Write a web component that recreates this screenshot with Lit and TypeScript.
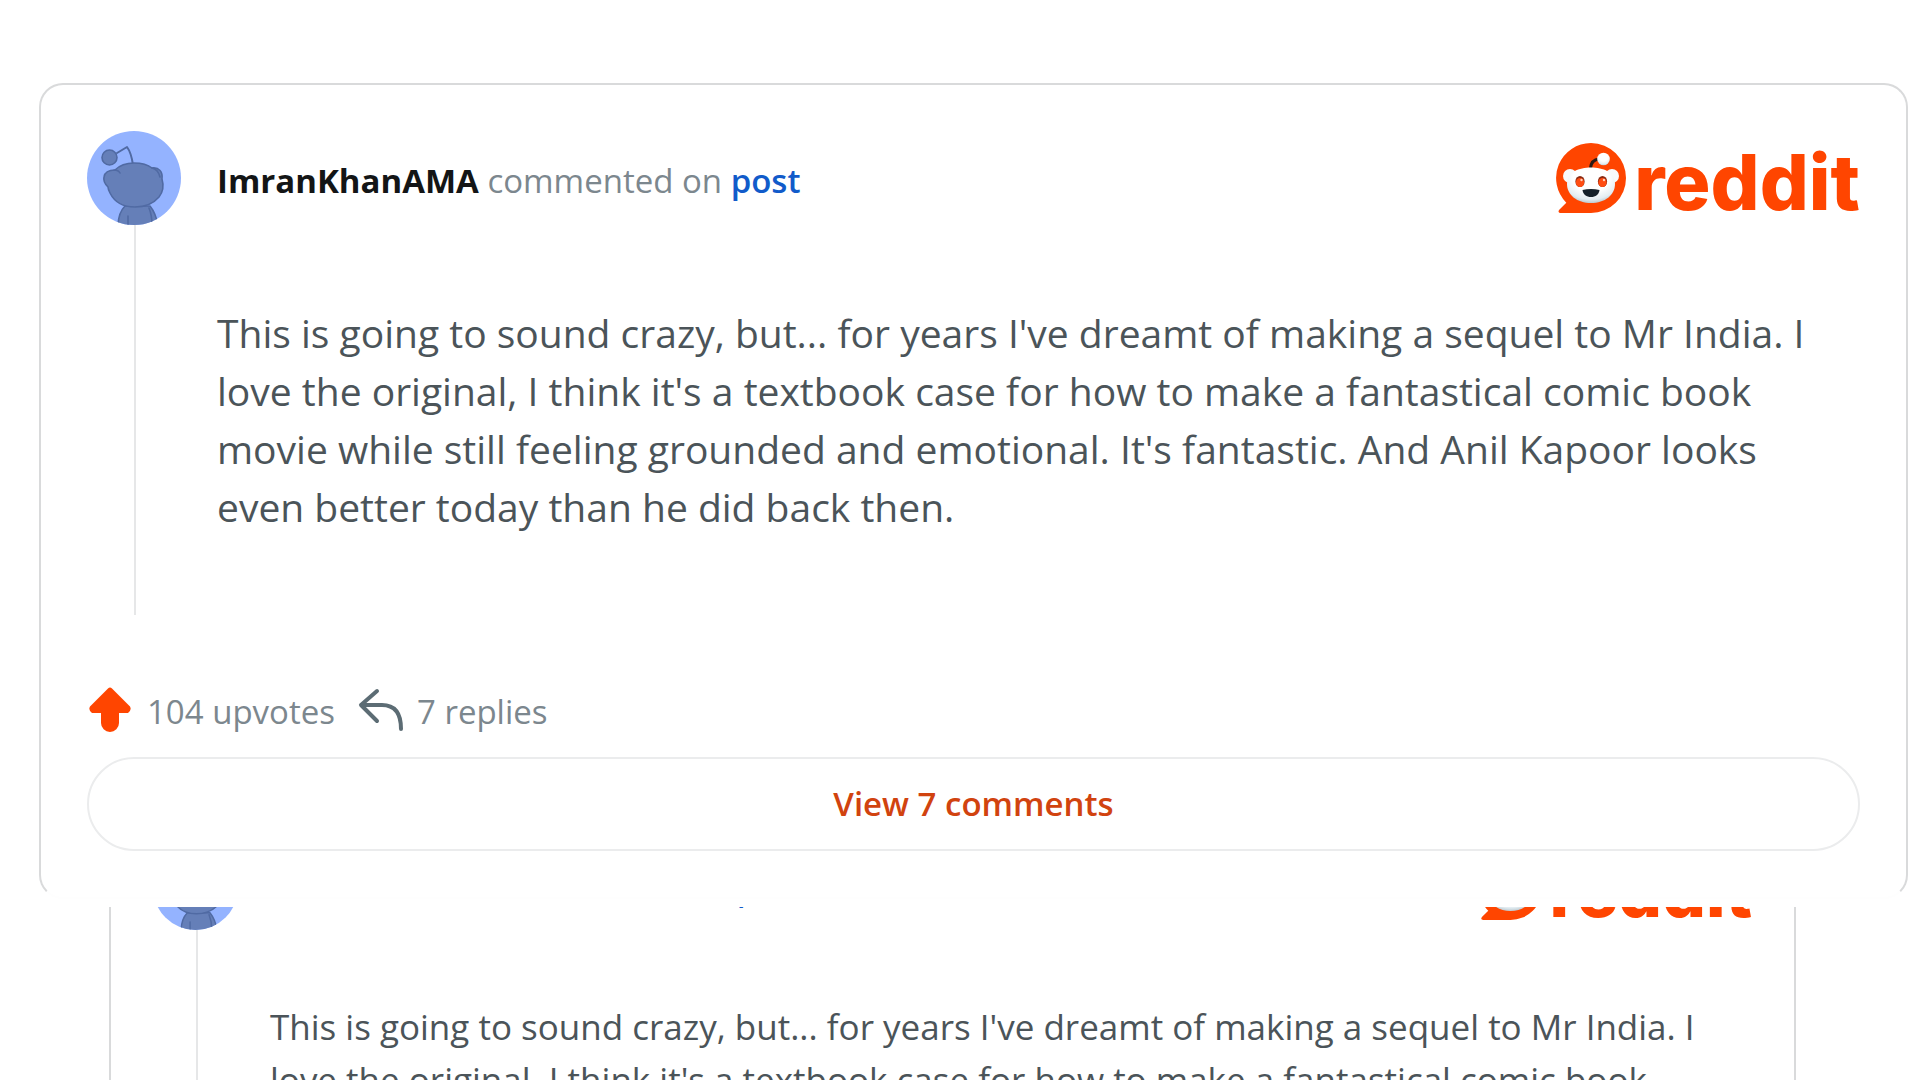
import { LitElement, html, css } from "lit";
import { customElement, property } from "lit/decorators.js";

interface Comment {
  author: string;
  body: string;
  upvotes: number;
  replies: number;
}

const comment: Comment = {
  author: "ImranKhanAMA",
  body:
    "This is going to sound crazy, but... for years I've dreamt of making a sequel to Mr India. I love the original, I think it's a textbook case for how to make a fantastical comic book movie while still feeling grounded and emotional. It's fantastic. And Anil Kapoor looks even better today than he did back then.",
  upvotes: 104,
  replies: 7,
};

@customElement("user-avatar")
class UserAvatar extends LitElement {
  static styles = css`
    :host {
      display: block;
      flex: none;
    }
    .avatar {
      display: block;
      width: 100%;
      height: 100%;
    }
  `;

  render() {
    return html`
      <svg class="avatar" viewBox="0 0 94 94" role="img" aria-label="Avatar">
        <clipPath id="disc"><circle cx="47" cy="47" r="47" /></clipPath>
        <g clip-path="url(#disc)">
          <rect width="94" height="94" fill="#94b3ff" />
          <g fill="#657fb8" stroke="#506aa3" stroke-width="1.6" stroke-linecap="round" stroke-linejoin="round">
            <path d="M46 34 C45 27 43 20 40 16 L30 22" fill="none" stroke-width="2" />
            <circle cx="22.500" cy="26.500" r="7.500" />
            <path d="M31 96 C31 86 34 79 38 75 H63 C67 80 70 87 71 96 Z" />
            <path d="M41 85 V94 M62 77 C64 82 65 88 65 94" fill="none" />
            <path
              d="M17 46 C18 40 23 39 28 39 C33 34 39 32 47 32 C55 32 60 33 65 37 C72 36 76 41 75 48 C77 55 76 61 72 66 C66 73 57 76 48 76 C38 76 28 72 23 62 C22 60 21 58 21 56 C18 53 16 50 17 46 Z"
            />
            <path d="M27 39 C30 39 32 40 33 42 M65 37 C70 38 72 42 73 46" fill="none" />
          </g>
        </g>
      </svg>
    `;
  }
}

@customElement("reddit-logo")
class RedditLogo extends LitElement {
  static styles = css`
    :host {
      display: block;
    }
    .logo {
      display: flex;
      align-items: flex-start;
      gap: 8px;
      color: #ff4500;
      text-decoration: none;
    }
    .mark {
      width: var(--mark);
      height: var(--mark);
    }
    .word {
      font: 800 var(--word) / calc(var(--mark) + 8px) Inter, sans-serif;
    }
  `;

  render() {
    return html`
      <a class="logo" href="#reddit" aria-label="reddit">
        <svg class="mark" viewBox="0 0 70 70" aria-hidden="true">
          <defs>
            <radialGradient id="face" cx="50%" cy="30%" r="75%">
              <stop offset="0.5" stop-color="#ffffff" />
              <stop offset="0.8" stop-color="#e3edf2" />
              <stop offset="1" stop-color="#a9b8c0" />
            </radialGradient>
          </defs>
          <path
            fill="#ff4500"
            d="M35 0 A35 35 0 0 1 35 70 H5 C2 70 2 68 3.500 66.500 L10.300 59.700 A35 35 0 0 1 35 0 Z"
          />
          <path d="M34.500 25 C35 20 38 16.500 43 16" fill="none" stroke="#2b1a14" stroke-width="3" />
          <circle cx="47.500" cy="16" r="6.300" fill="url(#face)" />
          <circle cx="14" cy="33" r="7" fill="#f8fafb" />
          <circle cx="56" cy="33" r="7" fill="#f8fafb" />
          <path
            fill="url(#face)"
            d="M35 24.500 C47 24.500 59 29 59 41 C59 52 49 60 35 60 C21 60 11 52 11 41 C11 29 23 24.500 35 24.500 Z"
          />
          <ellipse cx="24" cy="38.500" rx="4.600" ry="5.600" fill="#8c2a12" />
          <ellipse cx="24" cy="39.500" rx="4.100" ry="4.600" fill="#ff4d12" />
          <ellipse cx="46.500" cy="38.500" rx="4.600" ry="5.600" fill="#8c2a12" />
          <ellipse cx="46.500" cy="39.500" rx="4.100" ry="4.600" fill="#ff4d12" />
          <circle cx="25.500" cy="37" r="1.200" fill="#ffd0bd" />
          <circle cx="48" cy="37" r="1.200" fill="#ffd0bd" />
          <path fill="#15212a" d="M26.500 47 C32 45.800 38 45.800 43.500 47 C43 51.500 39.500 54 35 54 C30.500 54 27 51.500 26.500 47 Z" />
        </svg>
        <span class="word">reddit</span>
      </a>
    `;
  }
}

@customElement("comment-card")
class CommentCard extends LitElement {
  @property({ attribute: false }) comment: Comment = comment;

  static styles = css`
    :host {
      display: block;
      font-family: "Open Sans", sans-serif;
      --avatar: 94px;
      --pad: 46px;
      --gap: 36px;
      --mark: 70px;
      --word: 77px;
      --meta: 33px;
      --text: 39px;
      --leading: 58px;
      --rule-gap: 79px;
    }
    :host([compact]) {
      --avatar: 85px;
      --pad: 42px;
      --gap: 32px;
      --mark: 63px;
      --word: 69px;
      --meta: 30px;
      --text: 35px;
      --leading: 53px;
      --rule-gap: 70px;
    }
    .card {
      padding: var(--pad);
      border: 2px solid #d9dadb;
      border-bottom-color: #fefefe;
      border-radius: 24px;
      background: #fff;
    }
    .header {
      display: flex;
      align-items: center;
      gap: var(--gap);
    }
    user-avatar {
      width: var(--avatar);
      height: var(--avatar);
    }
    reddit-logo {
      align-self: flex-start;
      margin-top: 12px;
    }
    .byline {
      flex: 1;
      margin: 0;
      padding-top: 4px;
      font-size: var(--meta);
      color: #7c878e;
    }
    .author {
      font-weight: 700;
      color: #131516;
    }
    .post {
      font-weight: 600;
      color: #115bca;
      text-decoration: none;
    }
    .thread {
      margin-left: calc(var(--avatar) / 2);
      padding: var(--rule-gap) 28px var(--rule-gap) calc(var(--avatar) / 2 + var(--gap) - 2px);
      border-left: 2px solid #e6e7e8;
    }
    .body {
      margin: 0;
      font-size: var(--text);
      line-height: var(--leading);
      color: #4b5459;
    }
    .stats {
      display: flex;
      align-items: center;
      margin-top: 70px;
      font-size: var(--meta);
      line-height: 46px;
      color: #7c878e;
    }
    .icon {
      width: 46px;
      height: 46px;
    }
    .count {
      padding: 4px 22px 0 14px;
    }
    .view {
      display: block;
      width: 100%;
      margin-top: 22px;
      padding: 22px;
      border: 2px solid #ebeced;
      border-radius: 48px;
      background: none;
      font: 600 var(--meta) / 46px "Open Sans", sans-serif;
      color: #d1430f;
    }
  `;

  render() {
    const { author, body, upvotes, replies } = this.comment;
    return html`
      <article class="card">
        <header class="header">
          <user-avatar></user-avatar>
          <p class="byline">
            <span class="author">${author}</span> commented on
            <a class="post" href="#post">post</a>
          </p>
          <reddit-logo></reddit-logo>
        </header>
        <div class="thread"><p class="body">${body}</p></div>
        <div class="stats">
          <svg class="icon" viewBox="0 0 46 46" aria-hidden="true">
            <path
              fill="#ff4500"
              d="M21 1.500 Q23 -0.500 25 1.500 L43 19.500 Q45 23 41 26 H32 V36 A9 9 0 0 1 14 36 V26 H5 Q1 23 3 19.500 Z"
            />
          </svg>
          <span class="count">${upvotes} upvotes</span>
          <svg class="icon" viewBox="0 0 46 46" aria-hidden="true">
            <path
              fill="none"
              stroke="#5c6c74"
              stroke-width="4"
              stroke-linecap="round"
              stroke-linejoin="round"
              d="M20 4 L4 18 L20 34 M4 18 H25 Q44 18 44 42"
            />
          </svg>
          <span class="count">${replies} replies</span>
        </div>
        <button class="view" type="button">View ${replies} comments</button>
      </article>
    `;
  }
}

@customElement("app-root")
class AppRoot extends LitElement {
  static styles = css`
    :host {
      display: block;
      background: #fff;
    }
    .page {
      display: flex;
      flex-direction: column;
      height: 100vh;
      overflow: hidden;
    }
    .front {
      flex: none;
      margin: 83px 12px 0 39px;
    }
    .peek {
      flex: 1;
      min-height: 0;
      margin-top: 8px;
      padding: 0 124px 0 109px;
      overflow: hidden;
    }
    .back {
      margin-top: -106px;
    }
  `;

  render() {
    return html`
      <main class="page">
        <comment-card class="front" .comment=${comment}></comment-card>
        <section class="peek">
          <comment-card class="back" compact .comment=${comment}></comment-card>
        </section>
      </main>
    `;
  }
}
